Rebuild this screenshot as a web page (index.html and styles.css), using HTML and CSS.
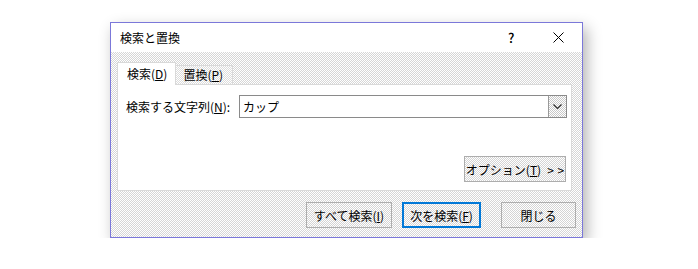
FILE: index.html
```html
<!DOCTYPE html>
<html lang="ja">
<head>
    <meta charset="UTF-8">
    <title>検索と置換</title>
    <link rel="stylesheet" href="styles.css">
</head>
<body>

<div class="dialog">
    <div class="titlebar">
        <span class="title">検索と置換</span>
        <span class="help">?</span>
        <span class="close">
            <svg width="11" height="11" viewBox="0 0 11 11"><path d="M0.5 0.5 L10.5 10.5 M10.5 0.5 L0.5 10.5" stroke="#000" stroke-width="1" fill="none"/></svg>
        </span>
    </div>

    <div class="content">
        <div class="tabs">
            <div class="tab active">検索(<u>D</u>)</div>
            <div class="tab">置換(<u>P</u>)</div>
        </div>

        <div class="panel">
            <div class="find-row">
                <label class="find-label">検索する文字列(<u>N</u>):</label>
                <div class="combo">
                    <span class="combo-text">カップ</span>
                    <span class="combo-btn">
                        <svg width="9" height="6" viewBox="0 0 9 6"><path d="M0.5 0.5 L4.5 4.5 L8.5 0.5" stroke="#333" stroke-width="1.2" fill="none"/></svg>
                    </span>
                </div>
            </div>
            <div class="options-row">
                <button class="btn options">オプション(<u>T</u>)<span class="arrows">&gt; &gt;</span></button>
            </div>
        </div>

        <div class="actions">
            <button class="btn btn-all">すべて検索(<u>I</u>)</button>
            <button class="btn btn-next">次を検索(<u>F</u>)</button>
            <button class="btn btn-close">閉じる</button>
        </div>
    </div>
</div>

</body>
</html>
```

FILE: styles.css
```css
/* Page */
body {
    margin: 0;
    background-color: #ffffff;
    font-family: "Noto Sans CJK JP", "Noto Sans", sans-serif;
    font-size: 12px;
    color: #000;
}

/* Dialog window */
.dialog {
    width: 473px;
    height: 216px;
    box-sizing: border-box;
    margin: 22px 0 0 110px;
    border: 1px solid #7b78d9;
    background: repeating-conic-gradient(#d6d6d6 0 25%, #ffffff 0 50%) 0 0 / 2px 2px;
    box-shadow: 4px 6px 14px rgba(0, 0, 0, 0.3);
    display: flex;
    flex-direction: column;
}

/* Title bar */
.titlebar {
    height: 29px;
    background-color: #ffffff;
    display: flex;
    align-items: center;
    padding-left: 9px;
}

.title {
    flex: 1;
}

.help {
    width: 14px;
    margin-right: 31px;
    font-size: 13px;
    font-weight: 500;
}

.close {
    display: flex;
    margin-right: 18px;
}

/* Body */
.content {
    flex: 1;
    padding: 10px 6px 8px 6px;
    display: flex;
    flex-direction: column;
}

/* Tabs */
.tabs {
    display: flex;
    align-items: flex-end;
    height: 22px;
}

.tab {
    height: 18px;
    line-height: 17px;
    padding: 0 9px 0 7px;
    border: 1px solid #d9d9d9;
    border-bottom: none;
    background: repeating-conic-gradient(#dcdcdc 0 25%, #ffffff 0 50%) 0 0 / 2px 2px;
    margin-left: -1px;
}

.tab.active {
    height: 22px;
    line-height: 22px;
    background: #ffffff;
    padding: 0 8px 0 9px;
    margin-left: 0;
    position: relative;
    z-index: 1;
    margin-bottom: -1px;
}

/* Tab panel */
.panel {
    height: 107px;
    box-sizing: border-box;
    background-color: #ffffff;
    border: 1px solid #d9d9d9;
    margin-right: 4px;
    padding: 10px 4px 0 8px;
}

.find-row {
    display: flex;
    align-items: center;
    height: 23px;
}

.find-label {
    width: 113px;
}

.combo {
    flex: 1;
    height: 23px;
    box-sizing: border-box;
    border: 1px solid #8a8a8a;
    display: flex;
    align-items: center;
    background: #ffffff;
}

.combo-text {
    flex: 1;
    padding-left: 3px;
}

.combo-btn {
    width: 17px;
    height: 21px;
    background: repeating-conic-gradient(#c8c8c8 0 25%, #ffffff 0 50%) 0 0 / 2px 2px;
    border-left: 1px solid #9a9a9a;
    display: flex;
    align-items: center;
    justify-content: center;
}

.options-row {
    display: flex;
    justify-content: flex-end;
    margin-top: 38px;
    padding-right: 1px;
}

/* Buttons */
.btn {
    font-family: inherit;
    font-size: 12px;
    height: 26px;
    box-sizing: border-box;
    border: 1px solid #adadad;
    background: repeating-conic-gradient(#d4d4d4 0 25%, #ffffff 0 50%) 0 0 / 2px 2px;
    color: #000;
    padding: 0;
}

.options {
    width: 102px;
}

.arrows {
    margin-left: 6px;
    word-spacing: 1px;
}

.actions {
    display: flex;
    justify-content: flex-end;
    margin-top: 11px;
}

.btn-all {
    width: 86px;
}

.btn-next {
    width: 79px;
    margin-left: 10px;
    border: 2px solid #0078d7;
}

.btn-close {
    width: 75px;
    margin-left: 20px;
}
```
